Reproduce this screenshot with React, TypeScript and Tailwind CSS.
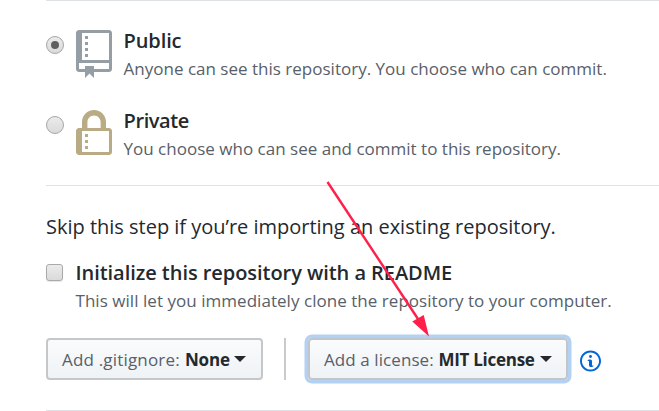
import type { ReactNode } from 'react';

function RepoIcon() {
  return (
    <svg width="36" height="48" viewBox="0 0 12 16" fill="#959da5" className="block shrink-0">
      <path d="M4 9H3V8h1v1zm0-3H3v1h1V6zm0-2H3v1h1V4zm0-2H3v1h1V2zm8-1v12c0 .55-.45 1-1 1H6v2l-1.5-1.5L3 16v-2H1c-.55 0-1-.45-1-1V1c0-.55.45-1 1-1h10c.55 0 1 .45 1 1zm-1 10H1v2h2v-1h3v1h5v-2zm0-10H2v9h9V1z" />
    </svg>
  );
}

function LockIcon() {
  return (
    <svg width="36" height="48" viewBox="0 0 12 16" fill="#b9ac84" className="block shrink-0">
      <path d="M4 13H3v-1h1v1zm8-6v7c0 .55-.45 1-1 1H1c-.55 0-1-.45-1-1V7c0-.55.45-1 1-1h1V4c0-2.2 1.8-4 4-4s4 1.8 4 4v2h1c.55 0 1 .45 1 1zM3.8 6h4.41V4c0-1.22-.98-2.2-2.2-2.2-1.22 0-2.2.98-2.2 2.2v2H3.8zM11 7H2v7h9V7zM4 8H3v1h1V8zm0 2H3v1h1v-1z" />
    </svg>
  );
}

function InfoIcon() {
  return (
    <svg width="21" height="24" viewBox="0 0 14 16" fill="#0366d6" className="block shrink-0">
      <path d="M6.3 5.69a.942.942 0 0 1-.28-.7c0-.28.09-.52.28-.7.19-.18.42-.28.7-.28.28 0 .52.09.7.28.18.19.28.42.28.7 0 .28-.09.52-.28.7a1 1 0 0 1-.7.3c-.28 0-.52-.11-.7-.3zM8 7.99c-.02-.25-.11-.48-.31-.69-.2-.19-.42-.3-.69-.31H6c-.27.02-.48.13-.69.31-.2.2-.3.44-.31.69h1v3c.02.27.11.5.31.69.2.2.42.31.69.31h1c.27 0 .48-.11.69-.31.2-.19.3-.42.31-.69H8V7.98v.01zM7 2.3c-3.14 0-5.7 2.54-5.7 5.68 0 3.14 2.56 5.7 5.7 5.7s5.7-2.55 5.7-5.7c0-3.15-2.56-5.69-5.7-5.69v.01zM7 .98c3.86 0 7 3.14 7 7s-3.14 7-7 7-7-3.12-7-7 3.14-7 7-7z" />
    </svg>
  );
}

function Caret() {
  return (
    <svg width="12" height="6" viewBox="0 0 12 6" fill="#24292e" className="block shrink-0">
      <path d="M0 0h12L6 6z" />
    </svg>
  );
}

function Radio({ checked = false }: { checked?: boolean }) {
  return (
    <span className="mt-[6px] flex size-[18px] shrink-0 items-center justify-center rounded-full border border-[#a6a6a6] bg-linear-to-b from-[#ebebeb] to-[#dadada]">
      {checked && <span className="size-[8px] rounded-full bg-[#5f5f5f]" />}
    </span>
  );
}

function Option({ icon, title, note, checked }: { icon: ReactNode; title: ReactNode; note: ReactNode; checked?: boolean }) {
  return (
    <label className="flex h-20 shrink-0 items-start">
      <Radio checked={checked} />
      <span className="ml-3">{icon}</span>
      <span className="ml-[11.5px] flex flex-col whitespace-nowrap">
        {title}
        {note}
      </span>
    </label>
  );
}

export default function App() {
  return (
    <main className="relative flex h-[411px] w-[659px] flex-col overflow-hidden bg-white pl-[46px] font-['Open_Sans','Noto_Sans',sans-serif] text-[#24292e]">
      <div className="h-px shrink-0 bg-[#dfe2e5]" />
      <section className="flex h-[184px] shrink-0 flex-col pt-[29px]">
        <Option
          checked
          icon={<RepoIcon />}
          title={<span className="-mt-[4px] text-[20px] leading-[29px] font-semibold tracking-[-0.1px]">Public</span>}
          note={<span className="text-[17px] leading-[27px] tracking-[0.01px] text-[#586069]">Anyone can see this repository. You choose who can commit.</span>}
        />
        <Option
          icon={<LockIcon />}
          title={<span className="-mt-[4px] text-[20px] leading-[29px] font-semibold tracking-[-0.4px]">Private</span>}
          note={<span className="text-[17px] leading-[27px] tracking-[0.01px] text-[#586069]">You choose who can see and commit to this repository.</span>}
        />
      </section>
      <div className="h-px shrink-0 bg-[#dfe2e5]" />
      <section className="flex h-[224px] shrink-0 flex-col whitespace-nowrap pt-[26px]">
        <p className="text-[20px] leading-[30px] tracking-[-0.01px]">Skip this step if you’re importing an existing repository.</p>
        <label className="mt-[15px] flex items-start">
          <span className="mt-[7px] size-[17px] shrink-0 rounded-[3px] border border-[#a9a9a9] bg-linear-to-b from-[#ebebeb] to-[#dadada] shadow-[0_1px_1px_#0000001a]" />
          <span className="ml-[12.5px] flex flex-col">
            <span className="text-[20px] leading-[31px] font-semibold tracking-[-0.05px]">Initialize this repository with a README</span>
            <span className="text-[17px] leading-[26px] tracking-[0.04px] text-[#586069]">This will let you immediately clone the repository to your computer.</span>
          </span>
        </label>
        <div className="mt-[24px] flex h-[42px] items-center">
          <button className="flex h-[42px] w-[217px] items-center rounded-[4px] border-2 border-[#c5c8cb] bg-linear-to-b from-[#fafbfc] to-[#eff3f6] pl-[14px] text-[17px]">
            <span className="w-[123px] pt-px text-left tracking-[0.18px] text-[#586069]">Add .gitignore:</span>
            <span className="w-[49px] pt-px text-left font-bold tracking-[-0.2px]">None</span>
            <Caret />
          </button>
          <span className="ml-[21px] h-[42px] w-[2px] bg-[#c8cacc]" />
          <button className="ml-[22px] flex h-[42px] w-[260px] items-center rounded-[4px] border-2 border-[#c2c6ca] bg-linear-to-b from-[#fafbfc] to-[#eff3f6] pl-[14px] text-[17px] shadow-[0_0_0_3.5px_#b3d1f3]">
            <span className="w-[114.5px] pt-px text-left tracking-[0.08px] text-[#586069]">Add a license:</span>
            <span className="w-[101px] pt-px text-left font-bold tracking-[-0.28px]">MIT License</span>
            <Caret />
          </button>
          <span className="ml-3 mt-1">
            <InfoIcon />
          </span>
        </div>
      </section>
      <div className="h-px shrink-0 bg-[#dfe2e5]" />
      <svg className="absolute left-0 top-0" width="659" height="411" fill="#ff1f4b">
        <path d="M327.5 182L420 322" stroke="#ff1f4b" strokeWidth="2.4" />
        <path d="M429 336.5L412.3 321.5L423.7 315Z" />
      </svg>
    </main>
  );
}
